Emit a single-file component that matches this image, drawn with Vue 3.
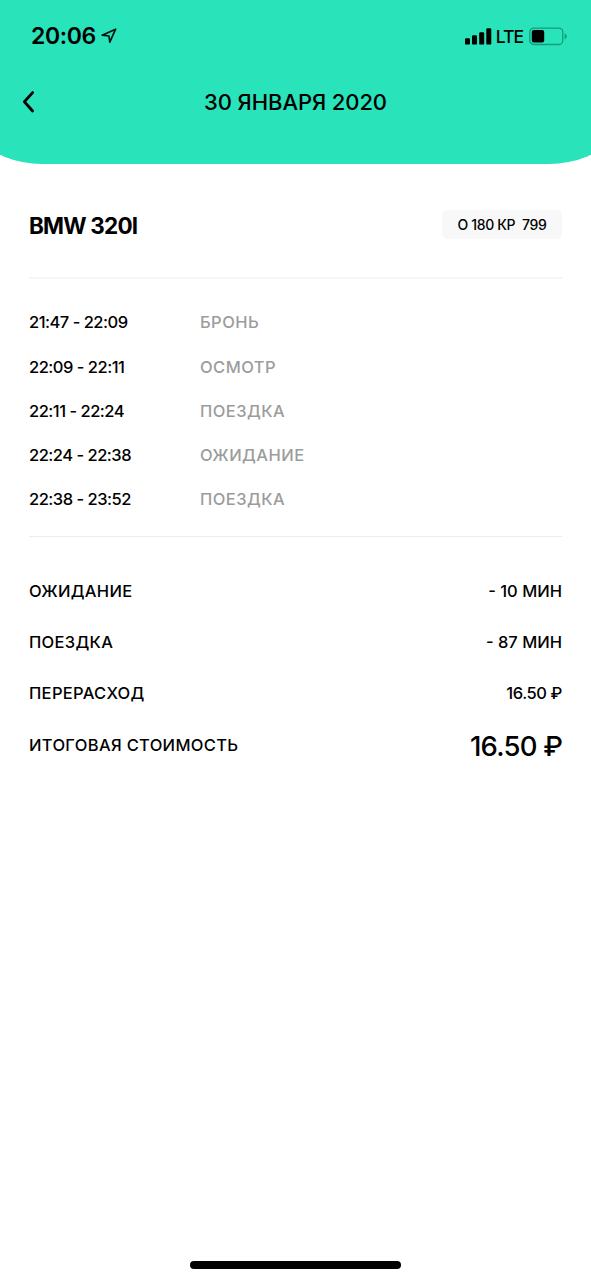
<template>
  <div class="screen">
    <header class="header">
      <div class="status-bar">
        <div class="status-left">
          <span class="clock">20:06</span>
          <svg class="location" width="16" height="16" viewBox="0 0 16 16">
            <path d="M1.2 7.2 L14.6 1.2 L8.8 14.2 L8 8 Z" fill="none" stroke="#03150f" stroke-width="1.7" stroke-linejoin="round" />
          </svg>
        </div>
        <div class="status-right">
          <svg width="27" height="17" viewBox="0 0 27 17">
            <rect x="0" y="10.2" width="5" height="6.4" rx="1.2" />
            <rect x="7" y="7.2" width="5" height="9.4" rx="1.2" />
            <rect x="14.2" y="4.2" width="5" height="12.4" rx="1.2" />
            <rect x="21.3" y="0.3" width="5" height="16.3" rx="1.2" />
          </svg>
          <span class="network">LTE</span>
          <svg class="battery" width="39" height="19" viewBox="0 0 39 19">
            <rect x="0.8" y="1.1" width="33" height="16.4" rx="4" fill="none" stroke="#149c79" stroke-width="1.3" />
            <rect x="2.8" y="3.1" width="12.4" height="12.4" rx="2" />
            <path d="M35.6 6.6 Q37.8 7.4 37.8 9.4 Q37.8 11.4 35.6 12.2 Z" fill="#149c79" />
          </svg>
        </div>
      </div>
      <div class="nav-bar">
        <button class="back" aria-label="Назад">
          <svg width="14" height="24" viewBox="0 0 14 24">
            <path d="M10.6 2.6 L2.4 11.8 L10.6 21" fill="none" stroke="#000" stroke-width="2.8" stroke-linecap="round" stroke-linejoin="round" />
          </svg>
        </button>
        <h1>30 ЯНВАРЯ 2020</h1>
      </div>
    </header>

    <main class="content">
      <section class="car">
        <h2>BMW 320I</h2>
        <div class="plate">О 180 КР&nbsp; 799</div>
      </section>

      <ul class="timeline">
        <li v-for="(step, i) in steps" :key="i">
          <span class="time">{{ step.time }}</span>
          <span class="name">{{ step.name }}</span>
        </li>
      </ul>

      <section class="summary">
        <div v-for="row in summary" :key="row.label" class="summary-row">
          <span class="label">{{ row.label }}</span>
          <span class="value" :class="{ price: row.isPrice }">{{ row.value }}</span>
        </div>
        <div class="summary-row total">
          <span class="label">ИТОГОВАЯ СТОИМОСТЬ</span>
          <span class="value">16.50 ₽</span>
        </div>
      </section>
    </main>

    <div class="home-indicator"></div>
  </div>
</template>

<script setup>
import { ref } from 'vue';

const steps = ref([
  { time: '21:47 - 22:09', name: 'БРОНЬ' },
  { time: '22:09 - 22:11', name: 'ОСМОТР' },
  { time: '22:11 - 22:24', name: 'ПОЕЗДКА' },
  { time: '22:24 - 22:38', name: 'ОЖИДАНИЕ' },
  { time: '22:38 - 23:52', name: 'ПОЕЗДКА' },
]);

const summary = ref([
  { label: 'ОЖИДАНИЕ', value: '- 10 МИН' },
  { label: 'ПОЕЗДКА', value: '- 87 МИН' },
  { label: 'ПЕРЕРАСХОД', value: '16.50 ₽', isPrice: true },
]);
</script>

<style>
body { margin: 0; background: #fff; }
</style>

<style scoped>
.screen {
  display: flex;
  flex-direction: column;
  width: 100%;
  height: 1280px;
  overflow: hidden;
  background: #fff;
  color: #000;
  font-family: Inter, "Noto Sans", sans-serif;
  font-weight: 500;
}
.header {
  box-sizing: border-box;
  flex: none;
  height: 164px;
  margin: 0 -58px;
  padding: 0 58px;
  background: #29e3bb;
  border-radius: 0 0 100px 100px;
}
.status-bar {
  display: flex;
  justify-content: space-between;
  height: 72px;
  padding: 0 23px 0 31px;
}
.status-left, .status-right { display: flex; align-items: center; }
.clock { font-size: 23px; font-weight: 600; letter-spacing: -0.4px; }
.location { margin-left: 5px; }
.network { margin-left: 4px; font-size: 17.5px; letter-spacing: -1px; }
.battery { margin-left: 6px; }
.nav-bar {
  display: grid;
  grid-template-columns: 60px 1fr 60px;
  align-items: center;
  height: 60px;
}
.back {
  display: flex;
  margin-left: 22px;
  padding: 0;
  border: none;
  background: none;
}
h1 {
  margin: 0;
  font-size: 22px;
  font-weight: 500;
  line-height: 28px;
  letter-spacing: -0.1px;
  text-align: center;
}
.content { flex: 1; padding: 0 29px; }
.car {
  display: flex;
  align-items: flex-start;
  justify-content: space-between;
  box-sizing: border-box;
  height: 113px;
  padding-top: 46px;
}
h2 { margin: 0; font-size: 22.5px; font-weight: 700; line-height: 32px; letter-spacing: -0.8px; }
.plate {
  width: 120px;
  height: 29px;
  border-radius: 5px;
  background: #f8f8f8;
  font-size: 14px;
  line-height: 29px;
  letter-spacing: -0.35px;
  text-align: center;
}
.timeline {
  margin: 0;
  padding: 21.3px 0 15.2px;
  border-top: 2px solid #f5f5f5;
  border-bottom: 1px solid #ececec;
  list-style: none;
}
.timeline li { display: flex; align-items: center; height: 44.2px; font-size: 16.5px; }
.time { width: 171px; letter-spacing: -0.5px; }
.name { color: #9c9c9c; letter-spacing: 0.45px; }
.summary { padding-top: 28.2px; }
.summary-row {
  display: flex;
  align-items: center;
  justify-content: space-between;
  height: 50.8px;
  font-size: 16.5px;
}
.label { letter-spacing: 0.32px; }
.price { letter-spacing: -0.4px; }
.total { height: 53px; }
.total .value { padding-top: 2px; font-size: 27.5px; letter-spacing: -0.8px; }
.home-indicator {
  flex: none;
  width: 211px;
  height: 8px;
  margin: 0 auto 11px;
  border-radius: 4px;
  background: #000;
}
</style>
